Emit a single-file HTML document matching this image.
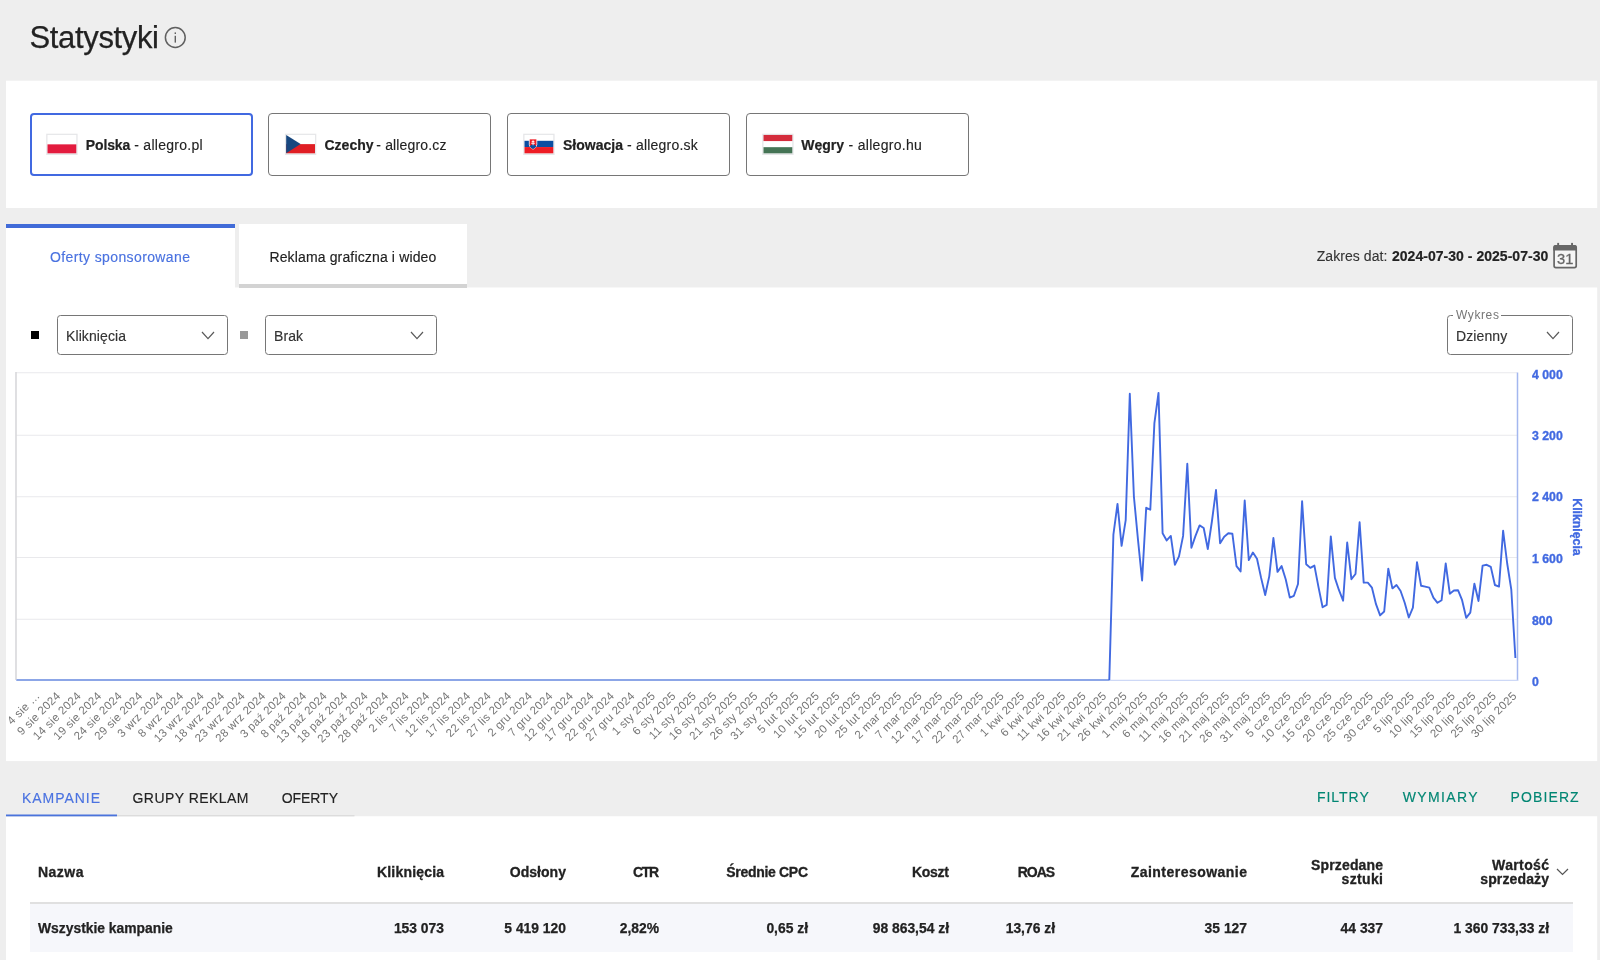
<!DOCTYPE html>
<html lang="pl">
<head>
<meta charset="utf-8">
<title>Statystyki</title>
<style>
*{box-sizing:border-box;margin:0;padding:0}
html,body{width:1600px;height:960px;overflow:hidden;background:#eeeeee;font-family:"Liberation Sans","DejaVu Sans",sans-serif;color:#222}
.abs{position:absolute}
.panel{position:absolute;background:#fff}
h1{position:absolute;left:29.5px;top:19.3px;font-size:31px;line-height:38px;font-weight:400;color:#222;letter-spacing:-0.35px;-webkit-text-stroke:0.25px #222}
.info{position:absolute;left:164px;top:26px;width:23px;height:23px}
.country{position:absolute;top:113px;width:223px;height:63px;border:1px solid #767676;border-radius:4px;background:#fff}
.country.sel{border:2px solid #4169e1}
.flag{position:absolute;top:133px}
.cn{position:absolute;top:135px;font-size:14px;line-height:20px;white-space:nowrap;color:#222;-webkit-text-stroke:0.12px #222}
.cn b{font-weight:700;-webkit-text-stroke:0.2px #222}
.tab{position:absolute;top:224px;height:63px;background:#fff;font-size:14px;white-space:nowrap}
.tab span{position:absolute;top:22.600px;line-height:20px}
.tab1{left:6px;width:228.700px;height:64px;border-top:4px solid #416bd8;color:#4a72e0;-webkit-text-stroke:0.15px #4a72e0}
.tab1 span{top:18.600px}
.tab2{left:239px;width:228.200px;height:64px;border-bottom:4px solid #d3d3d3;color:#222;-webkit-text-stroke:0.15px #222}
.daterange{position:absolute;top:246px;font-size:14px;line-height:20px;white-space:nowrap;color:#333;-webkit-text-stroke:0.12px #333}
.daterange b{color:#222;-webkit-text-stroke:0.2px #222}
.sel-box{position:absolute;top:315px;height:40px;border:1px solid #767676;border-radius:3.500px;background:#fff;font-size:14px;line-height:41px;padding-left:8px;color:#333;letter-spacing:0.1px;-webkit-text-stroke:0.15px #333}
.sel-box svg{position:absolute;right:12px;top:15px}
.sq{position:absolute;width:8.300px;height:8.300px;top:331.200px}
.legend{position:absolute;left:1453px;top:307.500px;background:#fff;padding:0 1.500px 0 3px;font-size:12px;line-height:14px;color:#767676;letter-spacing:0.6px}
svg text{font-family:"Liberation Sans","DejaVu Sans",sans-serif}
.btabs{position:absolute;top:787.500px;font-size:14px;line-height:20px;color:#222;white-space:nowrap;-webkit-text-stroke:0.15px}
.teal{color:#008673}
table{position:absolute;left:30px;top:841px;width:1543px;border-collapse:collapse;table-layout:fixed}
th{-webkit-text-stroke:0.3px #222;height:62px;font-size:14px;line-height:14px;font-weight:700;text-align:right;vertical-align:middle;padding:0 24px 0 0;color:#222;border-bottom:2px solid #e0e0e0}
td{-webkit-text-stroke:0.25px #222;height:49px;font-size:13.870px;font-weight:700;text-align:right;padding:0 24px 0 0;color:#222;background:#f6f7fb}
th:first-child,td:first-child{text-align:left;padding-left:8px}
</style>
</head>
<body>
<div id="root" style="position:absolute;left:0;top:0;width:1600px;height:960px;will-change:transform">
<svg class="abs" style="left:0;top:0" width="1600" height="960" viewBox="0 0 1600 960"><g fill="#fff"><rect x="6" y="80.700" width="1591.200" height="127.300"/><rect x="6" y="287.500" width="1591.200" height="473.600"/><rect x="6" y="816.250" width="1591.200" height="144"/></g><rect x="6" y="815.300" width="348.500" height="1" fill="#d4d4d4"/><rect x="6" y="814.500" width="111" height="1.800" fill="#4a73dc"/></svg>
<h1>Statystyki</h1>
<svg class="info" viewBox="0 0 23 23"><circle cx="11.3" cy="11.5" r="9.9" fill="none" stroke="#606060" stroke-width="1.5"/><rect x="10.6" y="9.8" width="1.4" height="6.8" fill="#606060"/><rect x="10.6" y="6.4" width="1.4" height="1.6" fill="#606060"/></svg>

<div class="country sel" style="left:30px"></div>
<svg class="flag" style="left:46px" width="33" height="23" viewBox="0 0 33 23"><rect x="0.2" y="0.7" width="31.4" height="21.3" fill="#e6e7e9"/><rect x="1.5" y="1.95" width="28.8" height="18.35" fill="#fff"/><rect x="1.5" y="11.35" width="28.8" height="8.95" fill="#e31b3e"/></svg>
<div class="cn" style="left:85.75px;letter-spacing:-0.12px"><b>Polska</b></div><div class="cn" style="left:134.25px;letter-spacing:0.27px">- allegro.pl</div>
<div class="country" style="left:268px"></div>
<svg class="flag" style="left:284px" width="33" height="23" viewBox="0 0 33 23"><g transform="translate(0.7,0)"><rect x="0.2" y="0.7" width="31.4" height="21.3" fill="#e6e7e9"/><rect x="1.5" y="1.95" width="28.8" height="18.35" fill="#fff"/><rect x="1.5" y="11.12" width="28.8" height="9.18" fill="#e01e24"/><path d="M1.5 1.95 L15.90 11.12 L1.5 20.30Z" fill="#17477f"/></g></svg>
<div class="cn" style="left:324.500px;letter-spacing:0px"><b>Czechy</b></div><div class="cn" style="left:376.300px;letter-spacing:0.15px">- allegro.cz</div>
<div class="country" style="left:507px"></div>
<svg class="flag" style="left:523px" width="33" height="23" viewBox="0 0 33 23"><rect x="0.2" y="0.7" width="31.4" height="21.3" fill="#e6e7e9"/><rect x="1.5" y="1.95" width="28.8" height="18.35" fill="#fff"/><rect x="1.5" y="7.80" width="28.8" height="6.25" fill="#0b4ea2"/><rect x="1.5" y="14.05" width="28.8" height="6.25" fill="#ee1c25"/><g transform="translate(0.2,0.55)"><path d="M6.1 5.4h7.500v5.600c0 2.900-3.750 4.600-3.750 4.600s-3.750-1.700-3.750-4.600z" fill="#ee1c25" stroke="#fff" stroke-width="0.8"/><path d="M6.600 12.600q1.300-1.500 3.250-2.000q1.950 0.500 3.250 2.000q-1.200 2-3.250 2.900q-2.050-0.900-3.250-2.900z" fill="#0b4ea2"/><path d="M9.850 6.700v5M8.500 8h2.700M8 9.700h3.700" stroke="#fff" stroke-width="0.9" fill="none"/></g></svg>
<div class="cn" style="left:563px;letter-spacing:0px"><b>Słowacja</b></div><div class="cn" style="left:627px;letter-spacing:0.2px">- allegro.sk</div>
<div class="country" style="left:746px"></div>
<svg class="flag" style="left:762px" width="33" height="23" viewBox="0 0 33 23"><rect x="0.2" y="0.7" width="31.4" height="21.3" fill="#e6e7e9"/><rect x="1.5" y="1.95" width="28.8" height="18.35" fill="#fff"/><rect x="1.5" y="1.95" width="28.8" height="6.12" fill="#d42c3c"/><rect x="1.5" y="14.18" width="28.8" height="6.12" fill="#457455"/></svg>
<div class="cn" style="left:801.2px;letter-spacing:0px"><b>Węgry</b></div><div class="cn" style="left:848.5px;letter-spacing:0.3px">- allegro.hu</div>

<div class="tab tab1"><span style="left:44px;letter-spacing:0.385px">Oferty sponsorowane</span></div>
<div class="tab tab2"><span style="left:30.400px;letter-spacing:0.146px">Reklama graficzna i wideo</span></div>
<div class="daterange" style="left:1316.700px;letter-spacing:0.07px">Zakres dat:</div><div class="daterange" style="left:1392px;letter-spacing:0.026px"><b>2024-07-30 - 2025-07-30</b></div>
<svg class="abs" style="left:1552px;top:241px" width="27" height="29" viewBox="0 0 27 29"><rect x="2.100" y="4.800" width="22.100" height="21.800" rx="1.800" fill="#f6f6f6" stroke="#666" stroke-width="1.700"/><path d="M1.250 9.600v-3.200a2.400 2.400 0 0 1 2.400-2.400h18.800a2.400 2.400 0 0 1 2.400 2.400v3.200z" fill="#666"/><rect x="5.200" y="1.900" width="1.900" height="3" fill="#666"/><rect x="19.100" y="1.900" width="1.900" height="3" fill="#666"/><text x="13.200" y="22.700" font-size="14.700" text-anchor="middle" fill="#666" stroke="#666" stroke-width="0.300">31</text></svg>

<div class="sq" style="left:30.700px;background:#000"></div>
<div class="sel-box" style="left:57px;width:171px">Kliknięcia<svg width="14" height="9" viewBox="0 0 14 9"><path d="M1 1l6 6.700 6-6.700" fill="none" stroke="#5a5a5a" stroke-width="1.2"/></svg></div>
<div class="sq" style="left:239.500px;background:#999"></div>
<div class="sel-box" style="left:265px;width:172px">Brak<svg width="14" height="9" viewBox="0 0 14 9"><path d="M1 1l6 6.700 6-6.700" fill="none" stroke="#5a5a5a" stroke-width="1.2"/></svg></div>
<div class="sel-box" style="left:1447px;width:126px">Dzienny<svg width="14" height="9" viewBox="0 0 14 9"><path d="M1 1l6 6.700 6-6.700" fill="none" stroke="#5a5a5a" stroke-width="1.2"/></svg></div>
<div class="legend">Wykres</div>

<svg class="abs" style="left:0;top:0;will-change:transform" width="1600" height="770" viewBox="0 0 1600 770">
<g stroke="#e9e9ec" stroke-width="1.1">
<line x1="16" x2="1517" y1="372.75" y2="372.75"/>
<line x1="16" x2="1517" y1="435.20" y2="435.20"/>
<line x1="16" x2="1517" y1="496.70" y2="496.70"/>
<line x1="16" x2="1517" y1="557.50" y2="557.50"/>
<line x1="16" x2="1517" y1="619.30" y2="619.30"/>
</g>
<line x1="16" x2="16" y1="372" y2="680" stroke="#d8d8db" stroke-width="1.600"/>
<line x1="1517.500" x2="1517.500" y1="372.500" y2="681" stroke="#a3b7ef" stroke-width="1.500"/>
<line x1="16" x2="1518" y1="680.400" y2="680.400" stroke="#cdd8f6" stroke-width="1.200"/>
<line x1="16.500" x2="1109.500" y1="680" y2="680" stroke="#8ca6e7" stroke-width="2.200"/>
<polyline fill="none" stroke="#4169e1" stroke-width="1.900" stroke-linejoin="round" points="1109.3,680.0 1113.4,534.6 1117.5,503.9 1121.6,545.9 1125.7,520.2 1129.8,393.7 1133.9,496.5 1138.0,539.9 1142.1,580.5 1146.2,507.8 1150.3,509.7 1154.4,423.1 1158.5,392.9 1162.6,533.3 1166.7,540.4 1170.8,535.9 1174.9,564.8 1179.0,556.4 1183.1,535.9 1187.3,463.7 1191.4,547.7 1195.5,535.9 1199.6,525.4 1203.7,528.0 1207.8,549.0 1211.9,521.5 1216.0,490.0 1220.1,543.3 1224.2,536.7 1228.3,533.3 1232.4,533.8 1236.5,566.1 1240.6,571.4 1244.7,500.5 1248.8,560.1 1252.9,552.5 1257.0,558.8 1261.1,577.9 1265.2,595.0 1269.3,576.1 1273.4,538.0 1277.5,571.9 1281.6,566.1 1285.7,579.2 1289.8,597.6 1293.9,595.8 1298.0,584.0 1302.1,501.3 1306.2,564.3 1310.3,567.9 1314.4,565.6 1318.5,587.1 1322.6,607.3 1326.7,604.9 1330.8,536.4 1334.9,577.9 1339.0,590.2 1343.1,600.7 1347.2,542.5 1351.4,579.2 1355.5,574.0 1359.6,522.3 1363.7,582.6 1367.8,582.6 1371.9,587.6 1376.0,604.2 1380.1,615.4 1384.2,611.5 1388.3,568.7 1392.4,588.4 1396.5,585.0 1400.6,591.0 1404.7,602.8 1408.8,617.5 1412.9,607.6 1417.0,562.2 1421.1,585.8 1425.2,586.6 1429.3,587.6 1433.4,597.6 1437.5,602.8 1441.6,600.2 1445.7,563.5 1449.8,593.7 1453.9,590.5 1458.0,590.2 1462.1,600.2 1466.2,617.8 1470.3,612.6 1474.4,583.7 1478.5,601.0 1482.6,565.6 1486.7,564.8 1490.8,566.9 1494.9,585.0 1499.0,586.6 1503.1,530.7 1507.2,563.5 1511.3,589.7 1515.4,658.0"/>
<g font-size="12.300" font-weight="700" fill="#4169e1" stroke="#4169e1" stroke-width="0.35">
<text x="1532" y="378.9">4 000</text>
<text x="1532" y="439.5">3 200</text>
<text x="1532" y="501.4">2 400</text>
<text x="1532" y="562.8">1 600</text>
<text x="1532" y="624.7">800</text>
<text x="1532" y="686.3">0</text>
<text transform="translate(1573,527) rotate(90)" text-anchor="middle">Kliknięcia</text>
</g>
<g font-size="11.500" fill="#767676" letter-spacing="0.25">
<text transform="translate(40.6,696.5) rotate(-45)" text-anchor="end">4 sie …</text>
<text transform="translate(61.1,696.5) rotate(-45)" text-anchor="end">9 sie 2024</text>
<text transform="translate(81.6,696.5) rotate(-45)" text-anchor="end">14 sie 2024</text>
<text transform="translate(102.1,696.5) rotate(-45)" text-anchor="end">19 sie 2024</text>
<text transform="translate(122.6,696.5) rotate(-45)" text-anchor="end">24 sie 2024</text>
<text transform="translate(143.1,696.5) rotate(-45)" text-anchor="end">29 sie 2024</text>
<text transform="translate(163.6,696.5) rotate(-45)" text-anchor="end">3 wrz 2024</text>
<text transform="translate(184.1,696.5) rotate(-45)" text-anchor="end">8 wrz 2024</text>
<text transform="translate(204.7,696.5) rotate(-45)" text-anchor="end">13 wrz 2024</text>
<text transform="translate(225.2,696.5) rotate(-45)" text-anchor="end">18 wrz 2024</text>
<text transform="translate(245.7,696.5) rotate(-45)" text-anchor="end">23 wrz 2024</text>
<text transform="translate(266.2,696.5) rotate(-45)" text-anchor="end">28 wrz 2024</text>
<text transform="translate(286.7,696.5) rotate(-45)" text-anchor="end">3 paź 2024</text>
<text transform="translate(307.2,696.5) rotate(-45)" text-anchor="end">8 paź 2024</text>
<text transform="translate(327.7,696.5) rotate(-45)" text-anchor="end">13 paź 2024</text>
<text transform="translate(348.2,696.5) rotate(-45)" text-anchor="end">18 paź 2024</text>
<text transform="translate(368.8,696.5) rotate(-45)" text-anchor="end">23 paź 2024</text>
<text transform="translate(389.3,696.5) rotate(-45)" text-anchor="end">28 paź 2024</text>
<text transform="translate(409.8,696.5) rotate(-45)" text-anchor="end">2 lis 2024</text>
<text transform="translate(430.3,696.5) rotate(-45)" text-anchor="end">7 lis 2024</text>
<text transform="translate(450.8,696.5) rotate(-45)" text-anchor="end">12 lis 2024</text>
<text transform="translate(471.3,696.5) rotate(-45)" text-anchor="end">17 lis 2024</text>
<text transform="translate(491.8,696.5) rotate(-45)" text-anchor="end">22 lis 2024</text>
<text transform="translate(512.3,696.5) rotate(-45)" text-anchor="end">27 lis 2024</text>
<text transform="translate(532.9,696.5) rotate(-45)" text-anchor="end">2 gru 2024</text>
<text transform="translate(553.4,696.5) rotate(-45)" text-anchor="end">7 gru 2024</text>
<text transform="translate(573.9,696.5) rotate(-45)" text-anchor="end">12 gru 2024</text>
<text transform="translate(594.4,696.5) rotate(-45)" text-anchor="end">17 gru 2024</text>
<text transform="translate(614.9,696.5) rotate(-45)" text-anchor="end">22 gru 2024</text>
<text transform="translate(635.4,696.5) rotate(-45)" text-anchor="end">27 gru 2024</text>
<text transform="translate(655.9,696.5) rotate(-45)" text-anchor="end">1 sty 2025</text>
<text transform="translate(676.4,696.5) rotate(-45)" text-anchor="end">6 sty 2025</text>
<text transform="translate(697.0,696.5) rotate(-45)" text-anchor="end">11 sty 2025</text>
<text transform="translate(717.5,696.5) rotate(-45)" text-anchor="end">16 sty 2025</text>
<text transform="translate(738.0,696.5) rotate(-45)" text-anchor="end">21 sty 2025</text>
<text transform="translate(758.5,696.5) rotate(-45)" text-anchor="end">26 sty 2025</text>
<text transform="translate(779.0,696.5) rotate(-45)" text-anchor="end">31 sty 2025</text>
<text transform="translate(799.5,696.5) rotate(-45)" text-anchor="end">5 lut 2025</text>
<text transform="translate(820.0,696.5) rotate(-45)" text-anchor="end">10 lut 2025</text>
<text transform="translate(840.5,696.5) rotate(-45)" text-anchor="end">15 lut 2025</text>
<text transform="translate(861.1,696.5) rotate(-45)" text-anchor="end">20 lut 2025</text>
<text transform="translate(881.6,696.5) rotate(-45)" text-anchor="end">25 lut 2025</text>
<text transform="translate(902.1,696.5) rotate(-45)" text-anchor="end">2 mar 2025</text>
<text transform="translate(922.6,696.5) rotate(-45)" text-anchor="end">7 mar 2025</text>
<text transform="translate(943.1,696.5) rotate(-45)" text-anchor="end">12 mar 2025</text>
<text transform="translate(963.6,696.5) rotate(-45)" text-anchor="end">17 mar 2025</text>
<text transform="translate(984.1,696.5) rotate(-45)" text-anchor="end">22 mar 2025</text>
<text transform="translate(1004.6,696.5) rotate(-45)" text-anchor="end">27 mar 2025</text>
<text transform="translate(1025.2,696.5) rotate(-45)" text-anchor="end">1 kwi 2025</text>
<text transform="translate(1045.7,696.5) rotate(-45)" text-anchor="end">6 kwi 2025</text>
<text transform="translate(1066.2,696.5) rotate(-45)" text-anchor="end">11 kwi 2025</text>
<text transform="translate(1086.7,696.5) rotate(-45)" text-anchor="end">16 kwi 2025</text>
<text transform="translate(1107.2,696.5) rotate(-45)" text-anchor="end">21 kwi 2025</text>
<text transform="translate(1127.7,696.5) rotate(-45)" text-anchor="end">26 kwi 2025</text>
<text transform="translate(1148.2,696.5) rotate(-45)" text-anchor="end">1 maj 2025</text>
<text transform="translate(1168.7,696.5) rotate(-45)" text-anchor="end">6 maj 2025</text>
<text transform="translate(1189.3,696.5) rotate(-45)" text-anchor="end">11 maj 2025</text>
<text transform="translate(1209.8,696.5) rotate(-45)" text-anchor="end">16 maj 2025</text>
<text transform="translate(1230.3,696.5) rotate(-45)" text-anchor="end">21 maj 2025</text>
<text transform="translate(1250.8,696.5) rotate(-45)" text-anchor="end">26 maj 2025</text>
<text transform="translate(1271.3,696.5) rotate(-45)" text-anchor="end">31 maj 2025</text>
<text transform="translate(1291.8,696.5) rotate(-45)" text-anchor="end">5 cze 2025</text>
<text transform="translate(1312.3,696.5) rotate(-45)" text-anchor="end">10 cze 2025</text>
<text transform="translate(1332.8,696.5) rotate(-45)" text-anchor="end">15 cze 2025</text>
<text transform="translate(1353.4,696.5) rotate(-45)" text-anchor="end">20 cze 2025</text>
<text transform="translate(1373.9,696.5) rotate(-45)" text-anchor="end">25 cze 2025</text>
<text transform="translate(1394.4,696.5) rotate(-45)" text-anchor="end">30 cze 2025</text>
<text transform="translate(1414.9,696.5) rotate(-45)" text-anchor="end">5 lip 2025</text>
<text transform="translate(1435.4,696.5) rotate(-45)" text-anchor="end">10 lip 2025</text>
<text transform="translate(1455.9,696.5) rotate(-45)" text-anchor="end">15 lip 2025</text>
<text transform="translate(1476.4,696.5) rotate(-45)" text-anchor="end">20 lip 2025</text>
<text transform="translate(1496.9,696.5) rotate(-45)" text-anchor="end">25 lip 2025</text>
<text transform="translate(1517.4,696.5) rotate(-45)" text-anchor="end">30 lip 2025</text>
</g>
</svg>

<div class="btabs" style="left:22px;color:#4a72e0;letter-spacing:0.955px">KAMPANIE</div>
<div class="btabs" style="left:132.500px;letter-spacing:0.455px">GRUPY REKLAM</div>
<div class="btabs" style="left:281.700px;letter-spacing:-0.05px">OFERTY</div>
<div class="btabs teal" style="left:1316.900px;top:786.600px;letter-spacing:0.99px">FILTRY</div>
<div class="btabs teal" style="left:1402.800px;top:786.600px;letter-spacing:1.34px">WYMIARY</div>
<div class="btabs teal" style="left:1510.600px;top:786.600px;letter-spacing:1.1px">POBIERZ</div>

<table>
<colgroup><col style="width:308px"><col style="width:130px"><col style="width:122px"><col style="width:93px"><col style="width:149px"><col style="width:141px"><col style="width:106px"><col style="width:192px"><col style="width:136px"><col style="width:166px"></colgroup>
<tr><th><span style="letter-spacing:0.48px;margin-right:-0.48px">Nazwa</span></th><th><span style="letter-spacing:0.18px;margin-right:-0.18px">Kliknięcia</span></th><th><span style="letter-spacing:0.05px;margin-right:-0.05px">Odsłony</span></th><th><span style="letter-spacing:-1.44px;margin-right:1.44px">CTR</span></th><th><span style="letter-spacing:-0.3px;margin-right:0.3px">Średnie CPC</span></th><th><span style="letter-spacing:-0.25px;margin-right:0.25px">Koszt</span></th><th><span style="letter-spacing:-1.1px;margin-right:1.1px">ROAS</span></th><th><span style="letter-spacing:0.47px;margin-right:-0.47px">Zainteresowanie</span></th><th><span style="letter-spacing:0.138px;margin-right:-0.138px">Sprzedane</span><br><span style="letter-spacing:0.365px;margin-right:-0.365px">sztuki</span></th><th><span style="letter-spacing:0.364px;margin-right:-0.364px">Wartość</span><br><span style="letter-spacing:0.132px;margin-right:-0.132px">sprzedaży</span></th></tr>
<tr><td>Wszystkie kampanie</td><td>153 073</td><td>5 419 120</td><td>2,82%</td><td>0,65 zł</td><td>98 863,54 zł</td><td>13,76 zł</td><td>35 127</td><td>44 337</td><td>1 360 733,33 zł</td></tr>
</table>
<svg class="abs" style="left:1556px;top:868px" width="13" height="8" viewBox="0 0 13 8"><path d="M1 1l5.500 5.500 5.500-5.500" fill="none" stroke="#555" stroke-width="1.200"/></svg>
</div>
</body>
</html>
